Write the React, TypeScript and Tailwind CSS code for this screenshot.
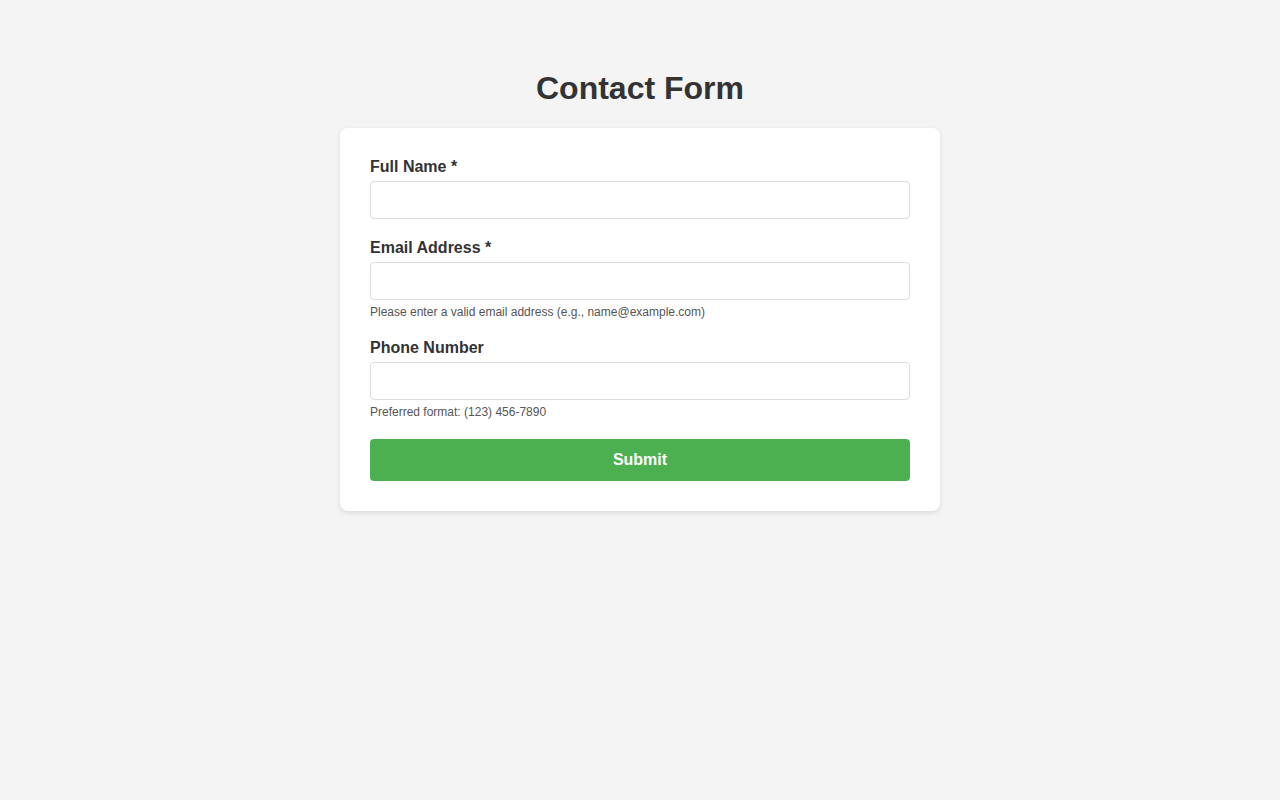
export default function App() {
  return (
    <div className="min-h-[800px] bg-[#f4f4f4] pt-[49px] font-['Liberation_Sans',Arial,sans-serif] text-[#333]">
      <h1 className="my-[21px] text-center text-[32px] font-bold leading-[37px]">Contact Form</h1>
      <form
        className="mx-auto w-[600px] rounded-[8px] bg-white p-[30px] shadow-[0_2px_5px_rgba(0,0,0,0.1)]"
        onSubmit={(e) => e.preventDefault()}
      >
        <div className="mb-[20px]">
          <label className="mb-[5px] block text-[16px] font-bold leading-[18px]">Full Name *</label>
          <input type="text" className="block h-[38px] w-full rounded-[4px] border border-[#ddd] px-[10px] text-[16px] outline-none" />
        </div>
        <div className="mb-[20px]">
          <label className="mb-[5px] block text-[16px] font-bold leading-[18px]">Email Address *</label>
          <input type="email" className="block h-[38px] w-full rounded-[4px] border border-[#ddd] px-[10px] text-[16px] outline-none" />
          <p className="mt-[5px] text-[12px] leading-[14px] text-[#555]">
            Please enter a valid email address (e.g., name@example.com)
          </p>
        </div>
        <div className="mb-[20px]">
          <label className="mb-[5px] block text-[16px] font-bold leading-[18px]">Phone Number</label>
          <input type="tel" className="block h-[38px] w-full rounded-[4px] border border-[#ddd] px-[10px] text-[16px] outline-none" />
          <p className="mt-[5px] text-[12px] leading-[14px] text-[#555]">Preferred format: (123) 456-7890</p>
        </div>
        <button
          type="submit"
          className="block h-[42px] w-full rounded-[4px] bg-[#4caf50] text-[16px] font-bold text-white"
        >
          Submit
        </button>
      </form>
    </div>
  );
}
